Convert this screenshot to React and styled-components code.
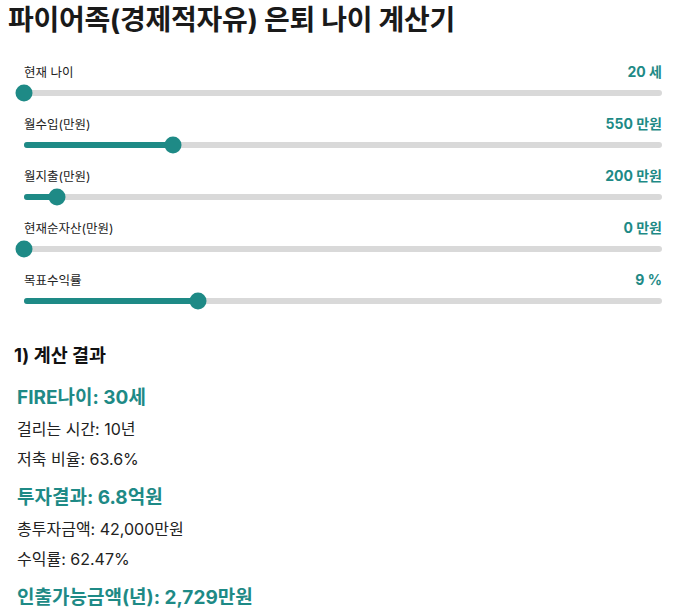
import { createGlobalStyle, styled } from "styled-components";

const TEAL = "#1e8a86";

const GlobalStyle = createGlobalStyle`
  body {
    margin: 0;
    background: #fff;
    font-family: Inter, "Noto Sans CJK KR", "Noto Sans", sans-serif;
    color: #1a1a1a;
  }
`;

const sliders = [
  { label: "현재 나이", value: 20, min: 20, max: 80, unit: "세" },
  { label: "월수입(만원)", value: 550, min: 0, max: 2350, unit: "만원" },
  { label: "월지출(만원)", value: 200, min: 0, max: 3850, unit: "만원" },
  { label: "현재순자산(만원)", value: 0, min: 0, max: 100000, unit: "만원" },
  { label: "목표수익률", value: 9, min: 0, max: 33, unit: "%" },
];

export default function App() {
  return (
    <Page>
      <GlobalStyle />
      <Title>파이어족(경제적자유) 은퇴 나이 계산기</Title>
      <SliderList>
        {sliders.map((s) => {
          const pct = ((s.value - s.min) / (s.max - s.min)) * 100;
          return (
            <SliderRow key={s.label}>
              <RowHead>
                <Label>{s.label}</Label>
                <Value>
                  {s.value} {s.unit}
                </Value>
              </RowHead>
              <Track>
                <Fill style={{ width: `${pct}%` }} />
                <Thumb style={{ left: `${pct}%` }} />
              </Track>
            </SliderRow>
          );
        })}
      </SliderList>

      <Results>
        <SectionTitle>1) 계산 결과</SectionTitle>
        <Highlight>FIRE나이: 30세</Highlight>
        <Line>걸리는 시간: 10년</Line>
        <Line>저축 비율: 63.6%</Line>
        <Highlight $gap>투자결과: 6.8억원</Highlight>
        <Line>총투자금액: 42,000만원</Line>
        <Line>수익률: 62.47%</Line>
        <Highlight $gap>인출가능금액(년): 2,729만원</Highlight>
      </Results>
    </Page>
  );
}

const Page = styled.div`
  width: 674px;
  padding: 0;
`;

const Title = styled.h1`
  margin: 0 0 0 8px;
  font-size: 28px;
  line-height: 40px;
  font-weight: 700;
  letter-spacing: -0.3px;
  color: #1a1a1a;
`;

const SliderList = styled.div`
  display: flex;
  flex-direction: column;
  margin: 23px 12px 0 24px;
`;

const SliderRow = styled.div`
  height: 52px;
`;

const RowHead = styled.div`
  display: flex;
  justify-content: space-between;
  align-items: center;
  height: 16px;
`;

const Label = styled.span`
  font-size: 12.5px;
  color: #222;
`;

const Value = styled.span`
  font-size: 14px;
  font-weight: 700;
  color: ${TEAL};
`;

const Track = styled.div`
  position: relative;
  margin-top: 11px;
  height: 6px;
  border-radius: 3px;
  background: #d9d9d9;
`;

const Fill = styled.div`
  height: 100%;
  border-radius: 3px;
  background: ${TEAL};
`;

const Thumb = styled.div`
  position: absolute;
  top: 50%;
  width: 17px;
  height: 17px;
  border-radius: 50%;
  background: ${TEAL};
  transform: translate(-50%, -50%);
`;

const Results = styled.div`
  margin: 20px 0 0 14px;
  display: flex;
  flex-direction: column;
`;

const SectionTitle = styled.h2`
  margin: 0 0 15px;
  font-size: 18.5px;
  line-height: 24px;
  font-weight: 700;
  color: #111;
`;

const Highlight = styled.div`
  margin: ${(p) => (p.$gap ? "8px" : "0")} 0 0 3px;
  font-size: 19px;
  line-height: 32px;
  font-weight: 700;
  color: ${TEAL};
`;

const Line = styled.div`
  margin-left: 3px;
  font-size: 16px;
  line-height: 30px;
  color: #222;
`;
